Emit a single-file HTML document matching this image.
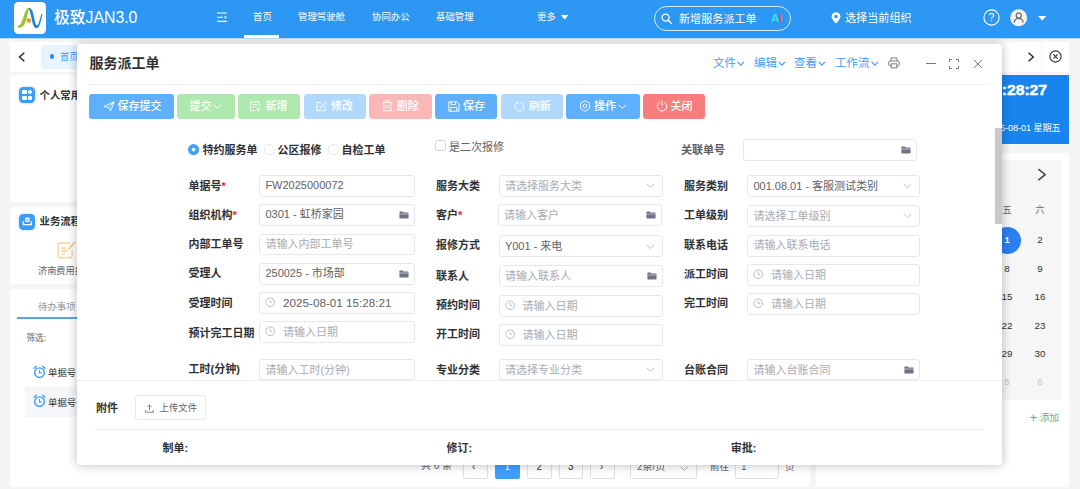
<!DOCTYPE html>
<html lang="zh-CN">
<head>
<meta charset="utf-8">
<title>极致JAN3.0 - 服务派工单</title>
<style>
*{box-sizing:border-box;margin:0;padding:0}
html,body{width:1080px;height:489px;overflow:hidden}
body{position:relative;background:#f5f5f6;font-family:"Liberation Sans","Noto Sans CJK SC",sans-serif;color:#303133;font-size:11px}
.a{position:absolute}
.t{position:absolute;white-space:nowrap;line-height:16px;height:16px}
.b{font-weight:700}
.w{color:#fff}
.card{position:absolute;background:#fff;border-radius:4px}
/* header */
#hd{left:0;top:0;width:1080px;height:38px;background:#2d97f4;z-index:30}
.nav{font-size:9.4px;color:#fff}
/* modal */
#md{left:77px;top:44px;width:925px;height:421px;background:#fff;border-radius:4px;box-shadow:0 0 10px 1px rgba(0,0,0,.23);z-index:20;overflow:hidden}
.btn{position:absolute;top:50px;height:24.6px;border-radius:3px;color:#fff;font-size:11px;font-weight:500;line-height:24px;white-space:nowrap}
.btn span{position:absolute;top:0}
.lb{position:absolute;white-space:nowrap;line-height:16px;height:16px;font-size:11px;font-weight:700;color:#303133}
.lb i{color:#f5222d;font-style:normal}
.in{position:absolute;height:21.6px;border:1px solid #e4e7ec;border-radius:3px;background:#fff}
.in span{position:absolute;left:5.400px;top:0;line-height:20px;white-space:nowrap;font-size:11px;color:#606266}
.in span.ph{color:#a8abb2;font-size:11px}
.in svg{position:absolute}
.lk{position:absolute;white-space:nowrap;line-height:16px;height:16px;font-size:11.5px;color:#409eff;top:11px}
</style>
</head>
<body>

<!-- ================= HEADER ================= -->
<div id="hd" class="a">
  <div class="a" style="left:14px;top:2.3px;width:31.6px;height:31.4px;background:#fff;border-radius:4.5px"></div>
  <svg class="a" style="left:14px;top:2px" width="32" height="32" viewBox="0 0 32 32">
    <path d="M3.500 24.200C7.300 23.600 8.700 17.200 10.200 12.600 11.200 9.500 12.500 7 14.100 5.800L15.400 6.500C14 9 13.600 13 12.300 17.600 10.900 22.600 8.700 26.500 4.200 25.800Z" fill="#9cc52b"/>
    <path d="M14.600 6.300C16.800 5.200 18.300 8.300 19.300 11.800 20.700 16.800 21.100 23.200 23 23.300 24.500 23.300 25.500 19 27.300 12.100L28.400 12.500C27 18 26 26.200 22.600 26.200 19 26.200 18.300 19 17.100 14.400 16.300 11.200 15.800 8.400 14.600 6.300Z" fill="#1f86e0"/>
    <circle cx="14.800" cy="18.500" r="2.250" fill="#f5922a"/>
  </svg>
  <div class="t w" style="left:54px;top:7px;font-size:15.8px;font-weight:500;line-height:22px;height:22px">极致JAN3.0</div>
  <svg class="a" style="left:217px;top:12px" width="11" height="11" viewBox="0 0 11 11"><path d="M0 1h10M0 5.2h6M0 9.4h10" stroke="#fff" stroke-width="1.1" fill="none"/><path d="M7.6 3.4l2.2 1.8-2.2 1.8z" fill="#fff"/></svg>
  <div class="t nav" style="left:253px;top:9px">首页</div>
  <div class="a" style="left:244px;top:35px;width:35px;height:3px;background:#fff"></div>
  <div class="t nav" style="left:298px;top:9px">管理驾驶舱</div>
  <div class="t nav" style="left:372px;top:9px">协同办公</div>
  <div class="t nav" style="left:436px;top:9px">基础管理</div>
  <div class="t nav" style="left:537px;top:9px">更多</div>
  <svg class="a" style="left:561px;top:15px" width="8" height="5" viewBox="0 0 8 5"><path d="M0 0h7.4L3.7 4.4z" fill="#fff"/></svg>
  <!-- search -->
  <div class="a" style="left:654px;top:6px;width:137px;height:24.5px;border:1px solid rgba(255,255,255,.8);border-radius:12.5px"></div>
  <svg class="a" style="left:661px;top:12.5px" width="12" height="12" viewBox="0 0 12 12"><circle cx="4.6" cy="4.6" r="3.5" stroke="#fff" stroke-width="1.3" fill="none"/><path d="M7.2 7.2l3 3" stroke="#fff" stroke-width="1.4" stroke-linecap="round"/></svg>
  <div class="t w" style="left:679px;top:10.5px;font-size:11.1px">新增服务派工单</div>
  <div class="t b" style="left:771px;top:9.500px;font-size:11.500px;color:#3ee0f5">A<span style="color:#ff4d5e;font-size:10.500px">i</span></div>
  <!-- org -->
  <svg class="a" style="left:830.5px;top:12px" width="10" height="12" viewBox="0 0 10 12"><path d="M5 0.3C2.4 0.3 0.6 2.2 0.6 4.6 0.6 7.6 5 11.6 5 11.6S9.4 7.6 9.4 4.6C9.4 2.2 7.6 0.3 5 0.3zM5 6.3A1.8 1.8 0 1 1 5 2.7 1.8 1.8 0 0 1 5 6.3z" fill="#fff"/></svg>
  <div class="t w" style="left:845px;top:9.5px;font-size:11.1px">选择当前组织</div>
  <!-- help / avatar -->
  <svg class="a" style="left:982.5px;top:8.5px" width="17" height="17" viewBox="0 0 17 17"><circle cx="8.5" cy="8.5" r="7.6" stroke="#fff" stroke-width="1.1" fill="none"/><text x="8.5" y="12.3" font-size="10.5" fill="#fff" text-anchor="middle" font-family="Liberation Sans, sans-serif">?</text></svg>
  <svg class="a" style="left:1010px;top:9px" width="18" height="18" viewBox="0 0 18 18"><circle cx="8.7" cy="8.7" r="8.5" fill="#f4f4f4"/><circle cx="8.7" cy="6.6" r="2.6" stroke="#555" stroke-width="1.05" fill="none"/><path d="M4.3 13.8c0-2.6 1.9-4.3 4.4-4.3s4.4 1.700 4.4 4.300" stroke="#555" stroke-width="1.05" fill="none"/></svg>
  <svg class="a" style="left:1038px;top:15.5px" width="9" height="5" viewBox="0 0 9 5"><path d="M0 0h8.4L4.2 4.6z" fill="#fff"/></svg>
</div>

<div class="a" style="left:0;top:38px;width:1080px;height:1px;background:rgba(45,151,244,.3);z-index:31"></div>
<!-- ================= BACKGROUND PAGE ================= -->
<!-- tab bar -->
<div class="a" style="left:10px;top:42px;width:1059px;height:30px;background:#fff"></div>
<svg class="a" style="left:17.5px;top:51.5px" width="8" height="10" viewBox="0 0 8 10"><path d="M6.3 0.8L1.5 5l4.8 4.2" stroke="#222" stroke-width="1.4" fill="none"/></svg>
<div class="a" style="left:40.5px;top:44.5px;width:60px;height:24.5px;background:#e8f3fe;border-radius:4px"></div>
<div class="a" style="left:49.8px;top:54.3px;width:4.4px;height:4.4px;border-radius:50%;background:#2d8cf0"></div>
<div class="t" style="left:60px;top:48.5px;font-size:9.2px;color:#409eff">首页</div>
<svg class="a" style="left:1026.5px;top:51.5px" width="8" height="10" viewBox="0 0 8 10"><path d="M1.5 0.8L6.3 5 1.5 9.2" stroke="#222" stroke-width="1.4" fill="none"/></svg>
<div class="a" style="left:1041px;top:42px;width:1px;height:30px;background:#f3f3f3"></div>
<svg class="a" style="left:1048.5px;top:50px" width="13" height="13" viewBox="0 0 13 13"><circle cx="6.5" cy="6.5" r="5.6" stroke="#333" stroke-width="1.15" fill="none"/><path d="M4.4 4.4l4.2 4.2M8.6 4.4L4.4 8.6" stroke="#333" stroke-width="1.15"/></svg>

<!-- card 1 : 个人常用 -->
<div class="card" style="left:10px;top:75px;width:800px;height:127px"></div>
<div class="a" style="left:19.200px;top:87px;width:15.600px;height:15.600px;border-radius:4.500px;background:#3b9dfa;box-shadow:0 0 3px #a9d3fb"></div>
<div class="a" style="left:22.300px;top:90.100px;width:4.300px;height:4.300px;border-radius:1px;background:#fff"></div>
<div class="a" style="left:28px;top:90.100px;width:4.300px;height:4.300px;border-radius:2.200px;background:#cfe6fd;border:1px solid #fff"></div>
<div class="a" style="left:22.300px;top:95.800px;width:4.300px;height:4.300px;border-radius:1px;background:#fff"></div>
<div class="a" style="left:28px;top:95.800px;width:4.300px;height:4.300px;border-radius:1px;background:#fff"></div>
<div class="t b" style="left:39.500px;top:87.600px;font-size:10.4px">个人常用</div>

<!-- card 2 : 业务流程 -->
<div class="card" style="left:10px;top:207px;width:800px;height:76.5px"></div>
<div class="a" style="left:19.200px;top:214px;width:15.600px;height:15.600px;border-radius:4.500px;background:#3b9dfa;box-shadow:0 0 3px #a9d3fb"></div>
<svg class="a" style="left:19.500px;top:214.300px" width="15" height="15" viewBox="0 0 15 15"><path d="M3.4 7.2v3.4h7.8V7.2" stroke="#fff" stroke-width="1.3" fill="none"/><rect x="5.2" y="3.4" width="4.4" height="4.6" rx="1" fill="#fff"/><path d="M6.3 5.2h2.2M6.3 6.6h2.2" stroke="#3b9dfa" stroke-width=".7"/></svg>
<div class="t b" style="left:39.500px;top:214.400px;font-size:10.4px">业务流程</div>
<svg class="a" style="left:56px;top:239.500px" width="20.500" height="20.500" viewBox="0 0 19 19"><path d="M12.800 2.800H4.200a2.200 2.200 0 0 0-2.200 2.200v9.400a2.200 2.200 0 0 0 2.200 2.200h8.600a2.200 2.200 0 0 0 2.200-2.200V9" stroke="#fad19a" stroke-width="1.300" fill="none"/><path d="M5 7.400h5M5 10.200h6M5 13h3.400" stroke="#fad19a" stroke-width="1.250"/><path d="M16.600 1.200l-5.400 6.200.1 1.900 1.800-.5 5.300-6.300z" fill="#fad19a"/></svg>
<div class="t" style="left:38px;top:263px;font-size:9.2px;color:#606266">济南费用报销</div>

<!-- card 3 : 待办事项 -->
<div class="card" style="left:10px;top:289px;width:800px;height:198px"></div>
<div class="t" style="left:38px;top:298.5px;font-size:9.4px;color:#909399">待办事项</div>
<div class="a" style="left:17px;top:317px;width:120px;height:2px;background:#5aa5f0"></div>
<div class="t" style="left:26.5px;top:330px;font-size:8.6px;color:#606266">筛选:</div>
<svg class="a" style="left:33px;top:364.5px" width="13" height="14" viewBox="0 0 14 15"><circle cx="7" cy="8.2" r="5.2" stroke="#409eff" stroke-width="1.5" fill="none"/><path d="M7 5.4v3h2.4" stroke="#409eff" stroke-width="1.2" fill="none"/><path d="M1.2 3.4L3.6 1.2M12.8 3.4L10.4 1.2" stroke="#409eff" stroke-width="1.5" stroke-linecap="round"/></svg>
<div class="t" style="left:48px;top:365px;font-size:9.4px;color:#303133">单据号</div>
<div class="a" style="left:25px;top:387px;width:770px;height:30px;background:#f5f7fa"></div>
<svg class="a" style="left:33px;top:394px" width="13" height="14" viewBox="0 0 14 15"><circle cx="7" cy="8.2" r="5.2" stroke="#409eff" stroke-width="1.5" fill="none"/><path d="M7 5.4v3h2.4" stroke="#409eff" stroke-width="1.2" fill="none"/><path d="M1.2 3.4L3.6 1.2M12.8 3.4L10.4 1.2" stroke="#409eff" stroke-width="1.5" stroke-linecap="round"/></svg>
<div class="t" style="left:48px;top:394.5px;font-size:9.4px;color:#303133">单据号</div>

<!-- pagination (peeks out under modal) -->
<div id="pg" class="a" style="left:0;top:0;width:0;height:0">
  <div class="t" style="left:421px;top:458px;font-size:10px;color:#606266">共 6 条</div>
  <div class="a" style="left:463px;top:455px;width:25px;height:24px;border:1px solid #dcdfe6;border-radius:2px;background:#fff"></div>
  <div class="t" style="left:472px;top:459px;font-size:10px;color:#303133">‹</div>
  <div class="a" style="left:495px;top:455px;width:24.5px;height:24px;border-radius:2px;background:#409eff"></div>
  <div class="t w" style="left:504.5px;top:459px;font-size:10px">1</div>
  <div class="a" style="left:527px;top:455px;width:24.5px;height:24px;border:1px solid #dcdfe6;border-radius:2px;background:#fff"></div>
  <div class="t" style="left:536.5px;top:459px;font-size:10px">2</div>
  <div class="a" style="left:558.5px;top:455px;width:24.5px;height:24px;border:1px solid #dcdfe6;border-radius:2px;background:#fff"></div>
  <div class="t" style="left:568px;top:459px;font-size:10px">3</div>
  <div class="a" style="left:590px;top:455px;width:24.5px;height:24px;border:1px solid #dcdfe6;border-radius:2px;background:#fff"></div>
  <div class="t" style="left:600px;top:459px;font-size:10px">›</div>
  <div class="a" style="left:630px;top:455px;width:67px;height:24px;border:1px solid #dcdfe6;border-radius:2px;background:#fff"></div>
  <div class="t" style="left:637px;top:459px;font-size:10px;color:#606266">2条/页</div>
  <svg class="a" style="left:680px;top:466px" width="9" height="6" viewBox="0 0 9 6"><path d="M0.8 0.8l3.6 3.6L8 0.8" stroke="#a8abb2" stroke-width="1" fill="none"/></svg>
  <div class="t" style="left:710px;top:459px;font-size:9.4px;color:#606266">前往</div>
  <div class="a" style="left:735px;top:455px;width:43.5px;height:24px;border:1px solid #dcdfe6;border-radius:2px;background:#fff"></div>
  <div class="t" style="left:741px;top:459px;font-size:10px;color:#606266">1</div>
  <div class="t" style="left:785px;top:459px;font-size:9.4px;color:#606266">页</div>
</div>

<!-- right column -->
<div class="a" style="left:816px;top:75px;width:253px;height:69px;background:#1a84ee"></div>
<div class="t b w" style="right:32.5px;top:81px;font-size:14px;line-height:18px;height:18px;transform:scaleX(1.12);transform-origin:right center;-webkit-text-stroke:.45px #fff">15:28:27</div>
<div class="t w" style="right:19.5px;top:120px;font-size:9px">2025-08-01 星期五</div>
<div class="card" style="left:816px;top:152.5px;width:253px;height:334.5px"></div>
<div class="a" style="left:824px;top:160px;width:237px;height:240px;background:#f6f6f6"></div>
<svg class="a" style="left:1037px;top:168px" width="11" height="14" viewBox="0 0 11 14"><path d="M1.4 1.2L8.2 6.700l-6.800 5.500" stroke="#444" stroke-width="1.5" fill="none"/></svg>
<div id="cal">
<div class="t" style="left:827px;top:202.4px;width:30px;text-align:center;font-size:9px;color:#606266">日</div>
<div class="t" style="left:860px;top:202.4px;width:30px;text-align:center;font-size:9px;color:#606266">一</div>
<div class="t" style="left:893px;top:202.4px;width:30px;text-align:center;font-size:9px;color:#606266">二</div>
<div class="t" style="left:926px;top:202.4px;width:30px;text-align:center;font-size:9px;color:#606266">三</div>
<div class="t" style="left:959px;top:202.4px;width:30px;text-align:center;font-size:9px;color:#606266">四</div>
<div class="t" style="left:992px;top:202.4px;width:30px;text-align:center;font-size:9px;color:#606266">五</div>
<div class="t" style="left:1025px;top:202.4px;width:30px;text-align:center;font-size:9px;color:#606266">六</div>
<div class="t" style="left:827px;top:232px;width:30px;text-align:center;font-size:9.8px;color:#c0c4cc">27</div>
<div class="t" style="left:860px;top:232px;width:30px;text-align:center;font-size:9.8px;color:#c0c4cc">28</div>
<div class="t" style="left:893px;top:232px;width:30px;text-align:center;font-size:9.8px;color:#c0c4cc">29</div>
<div class="t" style="left:926px;top:232px;width:30px;text-align:center;font-size:9.8px;color:#c0c4cc">30</div>
<div class="t" style="left:959px;top:232px;width:30px;text-align:center;font-size:9.8px;color:#c0c4cc">31</div>
<div class="a" style="left:993.5px;top:226.5px;width:27px;height:27px;border-radius:50%;background:#2b7ff0"></div>
<div class="t b w" style="left:992px;top:232px;width:30px;text-align:center;font-size:9.4px">1</div>
<div class="t" style="left:1025px;top:232px;width:30px;text-align:center;font-size:9.8px;color:#303133">2</div>
<div class="t" style="left:827px;top:260.6px;width:30px;text-align:center;font-size:9.8px;color:#303133">3</div>
<div class="t" style="left:860px;top:260.6px;width:30px;text-align:center;font-size:9.8px;color:#303133">4</div>
<div class="t" style="left:893px;top:260.6px;width:30px;text-align:center;font-size:9.8px;color:#303133">5</div>
<div class="t" style="left:926px;top:260.6px;width:30px;text-align:center;font-size:9.8px;color:#303133">6</div>
<div class="t" style="left:959px;top:260.6px;width:30px;text-align:center;font-size:9.8px;color:#303133">7</div>
<div class="t" style="left:992px;top:260.6px;width:30px;text-align:center;font-size:9.8px;color:#303133">8</div>
<div class="t" style="left:1025px;top:260.6px;width:30px;text-align:center;font-size:9.8px;color:#303133">9</div>
<div class="t" style="left:827px;top:289px;width:30px;text-align:center;font-size:9.8px;color:#303133">10</div>
<div class="t" style="left:860px;top:289px;width:30px;text-align:center;font-size:9.8px;color:#303133">11</div>
<div class="t" style="left:893px;top:289px;width:30px;text-align:center;font-size:9.8px;color:#303133">12</div>
<div class="t" style="left:926px;top:289px;width:30px;text-align:center;font-size:9.8px;color:#303133">13</div>
<div class="t" style="left:959px;top:289px;width:30px;text-align:center;font-size:9.8px;color:#303133">14</div>
<div class="t" style="left:992px;top:289px;width:30px;text-align:center;font-size:9.8px;color:#303133">15</div>
<div class="t" style="left:1025px;top:289px;width:30px;text-align:center;font-size:9.8px;color:#303133">16</div>
<div class="t" style="left:827px;top:317.5px;width:30px;text-align:center;font-size:9.8px;color:#303133">17</div>
<div class="t" style="left:860px;top:317.5px;width:30px;text-align:center;font-size:9.8px;color:#303133">18</div>
<div class="t" style="left:893px;top:317.5px;width:30px;text-align:center;font-size:9.8px;color:#303133">19</div>
<div class="t" style="left:926px;top:317.5px;width:30px;text-align:center;font-size:9.8px;color:#303133">20</div>
<div class="t" style="left:959px;top:317.5px;width:30px;text-align:center;font-size:9.8px;color:#303133">21</div>
<div class="t" style="left:992px;top:317.5px;width:30px;text-align:center;font-size:9.8px;color:#303133">22</div>
<div class="t" style="left:1025px;top:317.5px;width:30px;text-align:center;font-size:9.8px;color:#303133">23</div>
<div class="t" style="left:827px;top:346px;width:30px;text-align:center;font-size:9.8px;color:#303133">24</div>
<div class="t" style="left:860px;top:346px;width:30px;text-align:center;font-size:9.8px;color:#303133">25</div>
<div class="t" style="left:893px;top:346px;width:30px;text-align:center;font-size:9.8px;color:#303133">26</div>
<div class="t" style="left:926px;top:346px;width:30px;text-align:center;font-size:9.8px;color:#303133">27</div>
<div class="t" style="left:959px;top:346px;width:30px;text-align:center;font-size:9.8px;color:#303133">28</div>
<div class="t" style="left:992px;top:346px;width:30px;text-align:center;font-size:9.8px;color:#303133">29</div>
<div class="t" style="left:1025px;top:346px;width:30px;text-align:center;font-size:9.8px;color:#303133">30</div>
<div class="t" style="left:827px;top:374.3px;width:30px;text-align:center;font-size:9.8px;color:#303133">31</div>
<div class="t" style="left:860px;top:374.3px;width:30px;text-align:center;font-size:9.8px;color:#c0c4cc">1</div>
<div class="t" style="left:893px;top:374.3px;width:30px;text-align:center;font-size:9.8px;color:#c0c4cc">2</div>
<div class="t" style="left:926px;top:374.3px;width:30px;text-align:center;font-size:9.8px;color:#c0c4cc">3</div>
<div class="t" style="left:959px;top:374.3px;width:30px;text-align:center;font-size:9.8px;color:#c0c4cc">4</div>
<div class="t" style="left:992px;top:374.3px;width:30px;text-align:center;font-size:9.8px;color:#c0c4cc">5</div>
<div class="t" style="left:1025px;top:374.3px;width:30px;text-align:center;font-size:9.8px;color:#c0c4cc">6</div>
</div><!--/cal-->
<div class="t" style="left:1029.500px;top:409.5px;font-size:9.6px;color:#3fbf8f"><span style="font-size:13px;vertical-align:-1px">+</span> 添加</div>

<!-- ================= MODAL ================= -->
<div id="md" class="a">
  <div class="t b" style="left:12.5px;top:9px;font-size:14px;line-height:20px;height:20px;color:#303133">服务派工单</div>
  <div class="lk" style="left:636px">文件<svg style="margin-left:1px;vertical-align:1px" width="8" height="5" viewBox="0 0 8 5"><path d="M0.600 0.900l3.200 3.200L7 0.900" stroke="#409eff" stroke-width="1.250" fill="none"/></svg></div>
  <div class="lk" style="left:677px">编辑<svg style="margin-left:1px;vertical-align:1px" width="8" height="5" viewBox="0 0 8 5"><path d="M0.600 0.900l3.200 3.200L7 0.900" stroke="#409eff" stroke-width="1.250" fill="none"/></svg></div>
  <div class="lk" style="left:717px">查看<svg style="margin-left:1px;vertical-align:1px" width="8" height="5" viewBox="0 0 8 5"><path d="M0.600 0.900l3.200 3.200L7 0.900" stroke="#409eff" stroke-width="1.250" fill="none"/></svg></div>
  <div class="lk" style="left:758px">工作流<svg style="margin-left:1px;vertical-align:1px" width="8" height="5" viewBox="0 0 8 5"><path d="M0.600 0.900l3.200 3.200L7 0.900" stroke="#409eff" stroke-width="1.250" fill="none"/></svg></div>
  <svg class="a" style="left:811px;top:13px" width="12" height="12" viewBox="0 0 13 13"><path d="M3.4 4.4V1h6.2v3.4" stroke="#737373" stroke-width="1" fill="none"/><rect x="0.8" y="4.4" width="11.4" height="5" rx="1" stroke="#737373" stroke-width="1" fill="none"/><rect x="3.4" y="7.4" width="6.2" height="4.4" fill="#fff" stroke="#737373" stroke-width="1"/></svg>
  <div class="a" style="left:849px;top:18.6px;width:9.5px;height:1px;background:#74777c"></div>
  <svg class="a" style="left:872px;top:14.5px" width="10" height="10" viewBox="0 0 10 10"><path d="M0.5 3V0.5H3M7 0.5h2.5V3M9.5 7v2.5H7M3 9.5H0.5V7" stroke="#74777c" stroke-width="1" fill="none"/></svg>
  <svg class="a" style="left:896px;top:14.5px" width="10" height="10" viewBox="0 0 10 10"><path d="M0.8 0.8l8.2 8.2M9 0.8L0.8 9" stroke="#74777c" stroke-width="1" fill="none"/></svg>
  <div class="a" style="left:12px;top:40px;width:901px;height:1px;background:#f0f0f0"></div>
  <div class="btn" style="left:12px;width:85px;background:#5fb0fc"><svg style="position:absolute;left:13.5px;top:6.5px" width="12" height="11" viewBox="0 0 12 11"><path d="M0.8 5.6L11 0.8 7.6 10 5.6 6.6zM5.6 6.6L11 0.8" stroke="#fff" stroke-width="0.9" fill="none" stroke-linejoin="round"/></svg><span style="left:28.5px">保存提交</span></div>
  <div class="btn" style="left:100px;width:57.5px;background:#aee9ad"><span style="left:12.5px">提交</span><svg style="position:absolute;left:36px;top:10px" width="9" height="6" viewBox="0 0 9 6"><path d="M0.7 0.8l3.6 3.5L7.9 0.8" stroke="#fff" stroke-width="1" fill="none"/></svg></div>
  <div class="btn" style="left:161px;width:62px;background:#aee9ad"><svg style="position:absolute;left:12px;top:6.5px" width="11" height="11" viewBox="0 0 11 11"><path d="M9.6 5V1H0.6v8.6H5" stroke="#fff" stroke-width="0.9" fill="none"/><path d="M2.4 3.6h5.4M2.4 5.8h3" stroke="#fff" stroke-width="0.9"/><path d="M8.2 6.4v4M6.2 8.4h4" stroke="#fff" stroke-width="0.9"/></svg><span style="left:27.5px">新增</span></div>
  <div class="btn" style="left:227px;width:62px;background:#b1d9fe"><svg style="position:absolute;left:12px;top:6.5px" width="11" height="11" viewBox="0 0 11 11"><path d="M9.4 5.4v4.2H0.8V1.4h4.8" stroke="#fff" stroke-width="0.9" fill="none"/><path d="M9.6 0.8L4.6 6l-.4 1.4 1.4-.4 5-5.2z" stroke="#fff" stroke-width="0.8" fill="none"/></svg><span style="left:27px">修改</span></div>
  <div class="btn" style="left:292px;width:62.5px;background:#f9b7b7"><svg style="position:absolute;left:13px;top:6px" width="11" height="12" viewBox="0 0 11 12"><path d="M0.6 2.6h9.8M3.6 2.4V0.8h3.8v1.6M1.8 2.8v8h7.4v-8" stroke="#fff" stroke-width="0.9" fill="none"/><path d="M4.2 4.8v4M6.8 4.8v4" stroke="#fff" stroke-width="0.9"/></svg><span style="left:27.8px">删除</span></div>
  <div class="btn" style="left:358px;width:62px;background:#5fb0fc"><svg style="position:absolute;left:12.5px;top:6.5px" width="12" height="11" viewBox="0 0 12 11"><path d="M0.8 0.8h8l2.2 2.2v7.2H0.8z" stroke="#fff" stroke-width="0.9" fill="none" stroke-linejoin="round"/><path d="M3 0.8v2.8h4.6V0.8M2.6 10V6.4h6.2V10" stroke="#fff" stroke-width="0.9" fill="none"/></svg><span style="left:28px">保存</span></div>
  <div class="btn" style="left:424px;width:62px;background:#b1d9fe"><svg style="position:absolute;left:12.8px;top:6.5px" width="11" height="11" viewBox="0 0 11 11"><path d="M3.2 1.7A4.4 4.4 0 1 0 6.6 1.3" stroke="#fff" stroke-width="0.9" fill="none"/><path d="M3.6 0.4L2.8 2l1.6.7" stroke="#fff" stroke-width="0.8" fill="none"/></svg><span style="left:27.8px">刷新</span></div>
  <div class="btn" style="left:489px;width:73.5px;background:#5fb0fc"><svg style="position:absolute;left:12.5px;top:6px" width="12" height="12" viewBox="0 0 12 12"><path d="M6 0.700L10.600 3.350V8.650L6 11.300L1.400 8.650V3.350Z" stroke="#fff" stroke-width="0.9" fill="none" stroke-linejoin="round"/><circle cx="6" cy="6" r="1.9" stroke="#fff" stroke-width="0.9" fill="none"/></svg><span style="left:28px">操作</span><svg style="position:absolute;left:52px;top:10px" width="9" height="6" viewBox="0 0 9 6"><path d="M0.7 0.8l3.6 3.5L7.9 0.8" stroke="#fff" stroke-width="1" fill="none"/></svg></div>
  <div class="btn" style="left:566px;width:62px;background:#f97d7d"><svg style="position:absolute;left:12.5px;top:6px" width="12" height="12" viewBox="0 0 12 12"><path d="M3.6 2.300A4.700 4.700 0 1 0 8.400 2.300" stroke="#fff" stroke-width="1" fill="none"/><path d="M6 0.6v5" stroke="#fff" stroke-width="1"/></svg><span style="left:27.5px">关闭</span></div>
  <svg class="a" style="left:110px;top:99px" width="14" height="14" viewBox="0 0 14 14"><circle cx="6.600" cy="6.600" r="5.600" fill="#409eff"/><circle cx="6.600" cy="6.600" r="1.900" fill="#fff"/></svg>
  <div class="lb" style="left:125.5px;top:97.5px;">特约服务单</div>
  <svg class="a" style="left:186px;top:99px" width="14" height="14" viewBox="0 0 14 14"><circle cx="6.300" cy="6.600" r="5.100" fill="#fff" stroke="#e3e6eb" stroke-width="1"/></svg>
  <div class="lb" style="left:200.5px;top:97.5px;">公区报修</div>
  <svg class="a" style="left:250px;top:99px" width="14" height="14" viewBox="0 0 14 14"><circle cx="6.300" cy="6.600" r="5.100" fill="#fff" stroke="#e3e6eb" stroke-width="1"/></svg>
  <div class="lb" style="left:264.5px;top:97.5px;">自检工单</div>
  <div class="a" style="left:358px;top:96px;width:10.8px;height:10.8px;border-radius:2.5px;border:1px solid #d3d6db;background:#fff"></div>
  <div class="lb" style="left:372px;top:95px;font-weight:400;color:#606266">是二次报修</div>
  <div class="lb" style="left:604px;top:98px;color:#5a5d63">关联单号</div>
  <div class="in" style="left:666px;top:94.5px;width:174px;height:22px"><svg style="right:5.5px;top:6.0px" width="10" height="8" viewBox="0 0 10 8"><path d="M0.4 1.2a.8.8 0 0 1 .8-.8h2.4l1 1h4.2a.8.8 0 0 1 .8.8v.5H0.4z" fill="#6e7283"/><path d="M0.4 3.3h9.2v3.5a.8.8 0 0 1-.8.8H1.2a.8.8 0 0 1-.8-.8z" fill="#6e7283"/></svg></div>
  <div class="lb" style="left:111.6px;top:133.8px;">单据号<i>*</i></div>
  <div class="in" style="left:182px;top:131px;width:156px;height:21.6px"><span style="line-height:19.6px">FW2025000072</span></div>
  <div class="lb" style="left:111.6px;top:162.5px;">组织机构<i>*</i></div>
  <div class="in" style="left:182px;top:160.2px;width:156px;height:21.6px"><span style="line-height:19.6px">0301 - 虹桥家园</span><svg style="right:5.5px;top:5.8px" width="10" height="8" viewBox="0 0 10 8"><path d="M0.4 1.2a.8.8 0 0 1 .8-.8h2.4l1 1h4.2a.8.8 0 0 1 .8.8v.5H0.4z" fill="#6e7283"/><path d="M0.4 3.3h9.2v3.5a.8.8 0 0 1-.8.8H1.2a.8.8 0 0 1-.8-.8z" fill="#6e7283"/></svg></div>
  <div class="lb" style="left:111.6px;top:191.5px;">内部工单号</div>
  <div class="in" style="left:182px;top:189.9px;width:156px;height:21.6px"><span class="ph" style="line-height:19.6px">请输入内部工单号</span></div>
  <div class="lb" style="left:111.6px;top:220.5px;">受理人</div>
  <div class="in" style="left:182px;top:219px;width:156px;height:21.6px"><span style="line-height:19.6px">250025 - 市场部</span><svg style="right:5.5px;top:5.8px" width="10" height="8" viewBox="0 0 10 8"><path d="M0.4 1.2a.8.8 0 0 1 .8-.8h2.4l1 1h4.2a.8.8 0 0 1 .8.8v.5H0.4z" fill="#6e7283"/><path d="M0.4 3.3h9.2v3.5a.8.8 0 0 1-.8.8H1.2a.8.8 0 0 1-.8-.8z" fill="#6e7283"/></svg></div>
  <div class="lb" style="left:111.6px;top:250.5px;">受理时间</div>
  <div class="in" style="left:182px;top:248px;width:156px;height:21.6px"><svg style="left:5px;top:4.3px" width="11" height="11" viewBox="0 0 11.500 11.500"><circle cx="5.5" cy="5.5" r="4.5" stroke="#b0b3ba" stroke-width="0.9" fill="none"/><path d="M5.5 2.8v2.9h2.2" stroke="#b0b3ba" stroke-width="0.9" fill="none"/></svg><span class="" style="left:23px;font-size:11.7px;line-height:19.6px">2025-08-01 15:28:21</span></div>
  <div class="lb" style="left:111.6px;top:280.5px;">预计完工日期</div>
  <div class="in" style="left:182px;top:277px;width:156px;height:21.6px"><svg style="left:5px;top:4.3px" width="11" height="11" viewBox="0 0 11.500 11.500"><circle cx="5.5" cy="5.5" r="4.5" stroke="#b0b3ba" stroke-width="0.9" fill="none"/><path d="M5.5 2.8v2.9h2.2" stroke="#b0b3ba" stroke-width="0.9" fill="none"/></svg><span class="ph" style="left:23px;top:1px;line-height:19.6px">请输入日期</span></div>
  <div class="lb" style="left:111.6px;top:317px;">工时(分钟)</div>
  <div class="in" style="left:182px;top:315px;width:156px;height:21px"><span class="ph" style="line-height:21.5px">请输入工时(分钟)</span></div>
  <div class="lb" style="left:359px;top:134px;">服务大类</div>
  <div class="in" style="left:421.5px;top:130.6px;width:164.5px;height:22.3px"><span class="ph" style="line-height:20.3px">请选择服务大类</span><svg style="right:7.5px;top:7.7px" width="9" height="6" viewBox="0 0 9 6"><path d="M0.7 0.9l3.8 3.7 3.8-3.7" stroke="#b4b8bf" stroke-width="0.9" fill="none"/></svg></div>
  <div class="lb" style="left:359px;top:163px;">客户<i>*</i></div>
  <div class="in" style="left:420.5px;top:160px;width:164.5px;height:22.3px"><span class="ph" style="line-height:20.3px">请输入客户</span><svg style="right:5.5px;top:6.2px" width="10" height="8" viewBox="0 0 10 8"><path d="M0.4 1.2a.8.8 0 0 1 .8-.8h2.4l1 1h4.2a.8.8 0 0 1 .8.8v.5H0.4z" fill="#6e7283"/><path d="M0.4 3.3h9.2v3.5a.8.8 0 0 1-.8.8H1.2a.8.8 0 0 1-.8-.8z" fill="#6e7283"/></svg></div>
  <div class="lb" style="left:359px;top:193px;">报修方式</div>
  <div class="in" style="left:421.5px;top:191px;width:164.5px;height:22.3px"><span style="line-height:20.3px">Y001 - 来电</span><svg style="right:7.5px;top:7.7px" width="9" height="6" viewBox="0 0 9 6"><path d="M0.7 0.9l3.8 3.7 3.8-3.7" stroke="#b4b8bf" stroke-width="0.9" fill="none"/></svg></div>
  <div class="lb" style="left:359px;top:224px;">联系人</div>
  <div class="in" style="left:421.5px;top:221px;width:164.5px;height:22px"><span class="ph" style="line-height:20px">请输入联系人</span><svg style="right:5.5px;top:6.0px" width="10" height="8" viewBox="0 0 10 8"><path d="M0.4 1.2a.8.8 0 0 1 .8-.8h2.4l1 1h4.2a.8.8 0 0 1 .8.8v.5H0.4z" fill="#6e7283"/><path d="M0.4 3.3h9.2v3.5a.8.8 0 0 1-.8.8H1.2a.8.8 0 0 1-.8-.8z" fill="#6e7283"/></svg></div>
  <div class="lb" style="left:359px;top:253px;">预约时间</div>
  <div class="in" style="left:421.5px;top:251px;width:164.5px;height:21.6px"><svg style="left:5px;top:4.3px" width="11" height="11" viewBox="0 0 11.500 11.500"><circle cx="5.5" cy="5.5" r="4.5" stroke="#b0b3ba" stroke-width="0.9" fill="none"/><path d="M5.5 2.8v2.9h2.2" stroke="#b0b3ba" stroke-width="0.9" fill="none"/></svg><span class="ph" style="left:23px;top:1px;line-height:19.6px">请输入日期</span></div>
  <div class="lb" style="left:359px;top:282px;">开工时间</div>
  <div class="in" style="left:421.5px;top:280px;width:164.5px;height:21.6px"><svg style="left:5px;top:4.3px" width="11" height="11" viewBox="0 0 11.500 11.500"><circle cx="5.5" cy="5.5" r="4.5" stroke="#b0b3ba" stroke-width="0.9" fill="none"/><path d="M5.5 2.8v2.9h2.2" stroke="#b0b3ba" stroke-width="0.9" fill="none"/></svg><span class="ph" style="left:23px;top:1px;line-height:19.6px">请输入日期</span></div>
  <div class="lb" style="left:359px;top:317.5px;">专业分类</div>
  <div class="in" style="left:421.5px;top:315px;width:164.5px;height:21px"><span class="ph" style="line-height:21.5px">请选择专业分类</span><svg style="right:7.5px;top:7.0px" width="9" height="6" viewBox="0 0 9 6"><path d="M0.7 0.9l3.8 3.7 3.8-3.7" stroke="#b4b8bf" stroke-width="0.9" fill="none"/></svg></div>
  <div class="lb" style="left:607px;top:134px;">服务类别</div>
  <div class="in" style="left:670px;top:130.6px;width:173px;height:22.3px"><span style="line-height:20.3px">001.08.01 - 客服测试类别</span><svg style="right:7.5px;top:7.7px" width="9" height="6" viewBox="0 0 9 6"><path d="M0.7 0.9l3.8 3.7 3.8-3.7" stroke="#b4b8bf" stroke-width="0.9" fill="none"/></svg></div>
  <div class="lb" style="left:607px;top:163px;">工单级别</div>
  <div class="in" style="left:670px;top:160.5px;width:173px;height:22.3px"><span class="ph" style="line-height:20.3px">请选择工单级别</span><svg style="right:7.5px;top:7.7px" width="9" height="6" viewBox="0 0 9 6"><path d="M0.7 0.9l3.8 3.7 3.8-3.7" stroke="#b4b8bf" stroke-width="0.9" fill="none"/></svg></div>
  <div class="lb" style="left:607px;top:193px;">联系电话</div>
  <div class="in" style="left:670px;top:191px;width:173px;height:21.6px"><span class="ph" style="line-height:19.6px">请输入联系电话</span></div>
  <div class="lb" style="left:607px;top:222px;">派工时间</div>
  <div class="in" style="left:670px;top:220px;width:173px;height:21.6px"><svg style="left:5px;top:4.3px" width="11" height="11" viewBox="0 0 11.500 11.500"><circle cx="5.5" cy="5.5" r="4.5" stroke="#b0b3ba" stroke-width="0.9" fill="none"/><path d="M5.5 2.8v2.9h2.2" stroke="#b0b3ba" stroke-width="0.9" fill="none"/></svg><span class="ph" style="left:23px;top:1px;line-height:19.6px">请输入日期</span></div>
  <div class="lb" style="left:607px;top:251px;">完工时间</div>
  <div class="in" style="left:670px;top:249px;width:173px;height:21.6px"><svg style="left:5px;top:4.3px" width="11" height="11" viewBox="0 0 11.500 11.500"><circle cx="5.5" cy="5.5" r="4.5" stroke="#b0b3ba" stroke-width="0.9" fill="none"/><path d="M5.5 2.8v2.9h2.2" stroke="#b0b3ba" stroke-width="0.9" fill="none"/></svg><span class="ph" style="left:23px;top:1px;line-height:19.6px">请输入日期</span></div>
  <div class="lb" style="left:607px;top:317.5px;">台账合同</div>
  <div class="in" style="left:670px;top:315px;width:173px;height:21px"><span class="ph" style="line-height:21.5px">请输入台账合同</span><svg style="right:5.5px;top:5.5px" width="10" height="8" viewBox="0 0 10 8"><path d="M0.4 1.2a.8.8 0 0 1 .8-.8h2.4l1 1h4.2a.8.8 0 0 1 .8.8v.5H0.4z" fill="#6e7283"/><path d="M0.4 3.3h9.2v3.5a.8.8 0 0 1-.8.8H1.2a.8.8 0 0 1-.8-.8z" fill="#6e7283"/></svg></div>
  <div class="a" style="left:918px;top:84px;width:7px;height:96px;background:#c9c9c9"></div>
  <div class="a" style="left:0;top:336px;width:925px;height:85px;background:#fff;border-top:1px solid #efefef"></div>
  <div class="lb" style="left:19px;top:356px;">附件</div>
  <div class="a" style="left:58px;top:351px;width:70.5px;height:25px;border:1px solid #e8eaee;border-radius:3px;background:#fff"></div>
  <svg class="a" style="left:67.5px;top:359.5px" width="9" height="9" viewBox="0 0 9 9"><path d="M0.6 6v2.2h7.800V6M4.500 6.200V1M2.600 2.800L4.500 0.900l1.900 1.900" stroke="#606266" stroke-width="0.8" fill="none"/></svg>
  <div class="t" style="left:82.5px;top:356px;font-size:9.4px;color:#606266">上传文件</div>
  <div class="a" style="left:18px;top:385px;width:888px;height:1px;background:#eeeeee"></div>
  <div class="lb" style="left:85.5px;top:395.5px;">制单:</div>
  <div class="lb" style="left:369.6px;top:395.5px;">修订:</div>
  <div class="lb" style="left:653.7px;top:395.5px;">审批:</div>
</div>

</body>
</html>
